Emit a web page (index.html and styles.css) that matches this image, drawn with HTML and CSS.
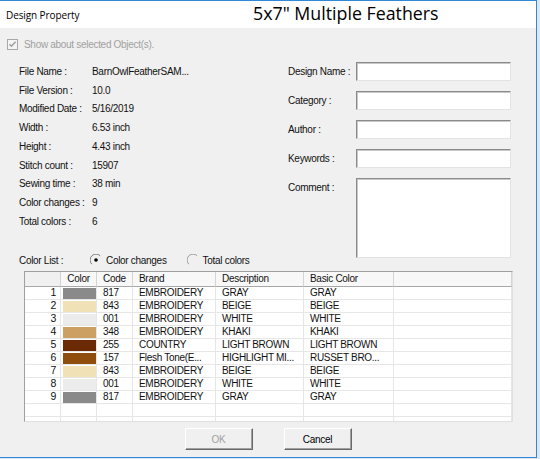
FILE: index.html
```html
<!DOCTYPE html>
<html lang="en">
  <head>
    <meta charset="UTF-8" />
    <title>Design Property</title>
    <link rel="stylesheet" href="styles.css">
  </head>
  <body>
    <div class="window">
      <div class="titlebar">
        <span class="caption">Design Property</span>
        <span class="design-title">5x7" Multiple Feathers</span>
      </div>

      <div class="show-selected">
        <svg class="checkbox" viewBox="0 0 11 11" width="11" height="11">
          <rect x="0.5" y="0.5" width="10" height="10" fill="#f4f4f4" stroke="#a8a8a8" />
          <path d="M2.5 5.2 L4.4 7.2 L8.6 2.8" fill="none" stroke="#a0a0a0" stroke-width="1.6" />
        </svg>
        <span>Show about selected Object(s).</span>
      </div>

      <div class="main">
        <div class="info">
          <div class="info-row"><span class="info-label">File Name :</span><span>BarnOwlFeatherSAM...</span></div>
          <div class="info-row"><span class="info-label">File Version :</span><span>10.0</span></div>
          <div class="info-row"><span class="info-label">Modified Date :</span><span>5/16/2019</span></div>
          <div class="info-row"><span class="info-label">Width :</span><span>6.53 inch</span></div>
          <div class="info-row"><span class="info-label">Height :</span><span>4.43 inch</span></div>
          <div class="info-row"><span class="info-label">Stitch count :</span><span>15907</span></div>
          <div class="info-row"><span class="info-label">Sewing time :</span><span>38 min</span></div>
          <div class="info-row"><span class="info-label">Color changes :</span><span>9</span></div>
          <div class="info-row"><span class="info-label">Total colors :</span><span>6</span></div>

          <div class="color-list">
            <span class="color-list-label">Color List :</span>
            <span class="radio-option">
              <svg class="radio" viewBox="0 0 12 12" width="12" height="12">
                <path d="M1.8 10.2 A5.5 5.5 0 0 1 10.2 1.8" fill="none" stroke="#7a7a7a" />
                <circle cx="6" cy="6" r="1.8" fill="#000" />
              </svg>
              Color changes
            </span>
            <span class="radio-option">
              <svg class="radio" viewBox="0 0 12 12" width="12" height="12">
                <path d="M1.8 10.2 A5.5 5.5 0 0 1 10.2 1.8" fill="none" stroke="#9a9a9a" />
              </svg>
              Total colors
            </span>
          </div>
        </div>

        <div class="meta-form">
          <div class="form-row"><label class="form-label">Design Name :</label><div class="field"></div></div>
          <div class="form-row"><label class="form-label">Category :</label><div class="field"></div></div>
          <div class="form-row"><label class="form-label">Author :</label><div class="field"></div></div>
          <div class="form-row"><label class="form-label">Keywords :</label><div class="field"></div></div>
          <div class="form-row comment"><label class="form-label">Comment :</label><div class="field comment-field"></div></div>
        </div>
      </div>

      <div class="grid-box">
        <table class="color-table">
          <colgroup>
            <col style="width: 36px">
            <col style="width: 36px">
            <col style="width: 36px">
            <col style="width: 83px">
            <col style="width: 88px">
            <col style="width: 90px">
            <col>
          </colgroup>
          <thead>
            <tr>
              <th></th>
              <th class="center">Color</th>
              <th>Code</th>
              <th>Brand</th>
              <th>Description</th>
              <th>Basic Color</th>
              <th></th>
            </tr>
          </thead>
          <tbody>
            <tr><td class="num">1</td><td class="swatch-cell"><div class="swatch gray"></div></td><td>817</td><td>EMBROIDERY</td><td>GRAY</td><td>GRAY</td><td></td></tr>
            <tr><td class="num">2</td><td class="swatch-cell"><div class="swatch beige"></div></td><td>843</td><td>EMBROIDERY</td><td>BEIGE</td><td>BEIGE</td><td></td></tr>
            <tr><td class="num">3</td><td class="swatch-cell"><div class="swatch white"></div></td><td>001</td><td>EMBROIDERY</td><td>WHITE</td><td>WHITE</td><td></td></tr>
            <tr><td class="num">4</td><td class="swatch-cell"><div class="swatch khaki"></div></td><td>348</td><td>EMBROIDERY</td><td>KHAKI</td><td>KHAKI</td><td></td></tr>
            <tr><td class="num">5</td><td class="swatch-cell"><div class="swatch light-brown"></div></td><td>255</td><td>COUNTRY</td><td>LIGHT BROWN</td><td>LIGHT BROWN</td><td></td></tr>
            <tr><td class="num">6</td><td class="swatch-cell"><div class="swatch russet"></div></td><td>157</td><td>Flesh Tone(E...</td><td>HIGHLIGHT MI...</td><td>RUSSET BRO...</td><td></td></tr>
            <tr><td class="num">7</td><td class="swatch-cell"><div class="swatch beige"></div></td><td>843</td><td>EMBROIDERY</td><td>BEIGE</td><td>BEIGE</td><td></td></tr>
            <tr><td class="num">8</td><td class="swatch-cell"><div class="swatch white"></div></td><td>001</td><td>EMBROIDERY</td><td>WHITE</td><td>WHITE</td><td></td></tr>
            <tr><td class="num">9</td><td class="swatch-cell"><div class="swatch gray"></div></td><td>817</td><td>EMBROIDERY</td><td>GRAY</td><td>GRAY</td><td></td></tr>
            <tr><td></td><td></td><td></td><td></td><td></td><td></td><td></td></tr>
            <tr><td></td><td></td><td></td><td></td><td></td><td></td><td></td></tr>
          </tbody>
        </table>
      </div>

      <div class="buttons">
        <button class="btn" disabled>OK</button>
        <button class="btn">Cancel</button>
      </div>
    </div>
  </body>
</html>
```

FILE: styles.css
```css
:root {
  --face: #f0f0f0;
  --frame: #2f88d8;
  --disabled: #a0a0a0;
  --grid-line: #e6e6e6;
}

body {
  margin: 0;
  width: 540px;
  height: 459px;
  background: #dfe6ee;
  font-family: "Liberation Sans", Arial, sans-serif;
  font-size: 10px;
  letter-spacing: -0.3px;
  color: #111;
}

.window {
  width: 537px;
  height: 458px;
  box-sizing: border-box;
  background: var(--face);
  border-top: 1px solid var(--frame);
  border-right: 1px solid var(--frame);
  border-bottom: 1px solid var(--frame);
}

.titlebar {
  display: grid;
  grid-template-columns: 246px 1fr;
  align-items: center;
  height: 27px;
  padding-left: 6px;
  background: #fff;
}

.caption {
  font-family: "Open Sans", sans-serif;
  font-size: 10px;
  letter-spacing: -0.1px;
  padding-top: 1px;
  color: #000;
}

.design-title {
  font-family: "Open Sans", sans-serif;
  font-size: 17.8px;
  letter-spacing: 0;
  line-height: 1;
  padding: 0 0 2px 1px;
  color: #000;
}

.show-selected {
  display: flex;
  align-items: center;
  gap: 6px;
  height: 11px;
  margin: 11px 0 0 7px;
  color: var(--disabled);
}

.checkbox {
  flex: none;
}

.main {
  display: flex;
  align-items: flex-start;
  margin-top: 12px;
}

.info {
  width: 288px;
  padding-left: 19px;
  box-sizing: border-box;
  flex: none;
}

.info-row {
  display: flex;
  align-items: center;
  height: 18.75px;
}

.info-label {
  width: 73px;
  flex: none;
}

.color-list {
  display: flex;
  align-items: center;
  height: 16px;
  margin-top: 21.25px;
  white-space: nowrap;
}

.color-list-label {
  width: 71px;
  flex: none;
}

.radio-option {
  display: flex;
  align-items: center;
  gap: 4px;
  margin-right: 20px;
}

.meta-form {
  display: flex;
  flex-direction: column;
  gap: 10px;
}

.form-row {
  display: flex;
  align-items: center;
}

.form-row.comment {
  align-items: flex-start;
}

.form-row.comment .form-label {
  padding-top: 4px;
}

.form-label {
  width: 68px;
  flex: none;
}

.field {
  width: 155px;
  height: 19px;
  box-sizing: border-box;
  background: #fff;
  border: 1px solid;
  border-color: #8a8a8a #e3e3e3 #e3e3e3 #8a8a8a;
  box-shadow: inset 1px 1px 0 #c8c8c8;
}

.comment-field {
  height: 80px;
}

.grid-box {
  width: 489px;
  height: 151px;
  margin: 3px 0 0 24px;
  box-sizing: border-box;
  overflow: hidden;
  background: #fff;
  border: 1px solid;
  border-color: #a0a0a0 #e0e0e0 #e0e0e0 #a0a0a0;
}

.color-table {
  width: 100%;
  table-layout: fixed;
  border-collapse: separate;
  border-spacing: 0;
}

.color-table th,
.color-table td {
  padding: 0 0 0 6px;
  text-align: left;
  white-space: nowrap;
  overflow: hidden;
  font-weight: normal;
}

.color-table th {
  height: 14px;
  line-height: 14px;
  background: #f8f8f8;
  border-right: 1px solid #d4d4d4;
  border-bottom: 1px solid #a8a8a8;
}

.color-table th:first-child {
  background: #f0f0f0;
}

.color-table th.center {
  text-align: center;
  padding: 0;
}

.color-table td {
  height: 11.6px;
  line-height: 11.6px;
  border-right: 1px solid var(--grid-line);
  border-bottom: 1px solid var(--grid-line);
}

.color-table td.num {
  text-align: right;
  padding: 0 4px 0 0;
  font-size: 10.5px;
}

.color-table td.swatch-cell {
  padding: 0 0 0 2px;
}

.swatch {
  height: 11px;
  margin-top: 1px;
}

.swatch.gray { background: #8a8a8a; }
.swatch.beige { background: #f0e2b6; }
.swatch.white { background: #ececec; }
.swatch.khaki { background: #cca062; }
.swatch.light-brown { background: #6b2906; }
.swatch.russet { background: #904e0e; }

.buttons {
  display: flex;
  justify-content: center;
  gap: 31px;
  margin-top: 6px;
}

.btn {
  width: 68px;
  height: 22px;
  padding: 0;
  font-family: inherit;
  font-size: 10px;
  letter-spacing: -0.3px;
  color: #000;
  background: var(--face);
  border: 1px solid;
  border-color: #fff #696969 #696969 #fff;
  box-shadow: inset -1px -1px 0 #a0a0a0;
}

.btn:disabled {
  color: var(--disabled);
}
```
